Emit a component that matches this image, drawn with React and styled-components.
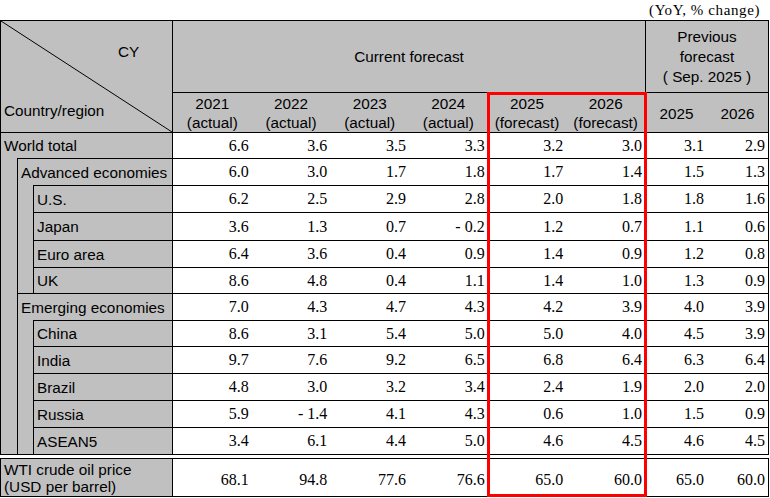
import React from 'react';
import styled, { createGlobalStyle } from 'styled-components';

const GRAY = '#c0c0c0';
const LINE = '1px solid #000';

const GlobalStyle = createGlobalStyle`
  html, body {
    margin: 0;
    padding: 0;
    background: #fff;
  }
  body {
    font-family: "Liberation Sans", Arial, sans-serif;
    color: #000;
  }
`;

const rows = [
  { label: 'World total', level: 0, h: 26, cur: ['6.6', '3.6', '3.5', '3.3', '3.2', '3.0'], prev: ['3.1', '2.9'] },
  { label: 'Advanced economies', level: 1, h: 27, cur: ['6.0', '3.0', '1.7', '1.8', '1.7', '1.4'], prev: ['1.5', '1.3'] },
  { label: 'U.S.', level: 2, h: 27, cur: ['6.2', '2.5', '2.9', '2.8', '2.0', '1.8'], prev: ['1.8', '1.6'] },
  { label: 'Japan', level: 2, h: 28, cur: ['3.6', '1.3', '0.7', '- 0.2', '1.2', '0.7'], prev: ['1.1', '0.6'] },
  { label: 'Euro area', level: 2, h: 27, cur: ['6.4', '3.6', '0.4', '0.9', '1.4', '0.9'], prev: ['1.2', '0.8'] },
  { label: 'UK', level: 2, h: 26, cur: ['8.6', '4.8', '0.4', '1.1', '1.4', '1.0'], prev: ['1.3', '0.9'] },
  { label: 'Emerging economies', level: 1, h: 27, cur: ['7.0', '4.3', '4.7', '4.3', '4.2', '3.9'], prev: ['4.0', '3.9'] },
  { label: 'China', level: 2, h: 26, cur: ['8.6', '3.1', '5.4', '5.0', '5.0', '4.0'], prev: ['4.5', '3.9'] },
  { label: 'India', level: 2, h: 27, cur: ['9.7', '7.6', '9.2', '6.5', '6.8', '6.4'], prev: ['6.3', '6.4'] },
  { label: 'Brazil', level: 2, h: 27, cur: ['4.8', '3.0', '3.2', '3.4', '2.4', '1.9'], prev: ['2.0', '2.0'] },
  { label: 'Russia', level: 2, h: 27, cur: ['5.9', '- 1.4', '4.1', '4.3', '0.6', '1.0'], prev: ['1.5', '0.9'] },
  { label: 'ASEAN5', level: 2, h: 27, cur: ['3.4', '6.1', '4.4', '5.0', '4.6', '4.5'], prev: ['4.6', '4.5'] },
];

const years = [
  ['2021', '(actual)'],
  ['2022', '(actual)'],
  ['2023', '(actual)'],
  ['2024', '(actual)'],
  ['2025', '(forecast)'],
  ['2026', '(forecast)'],
];

const Sheet = styled.div`
  position: relative;
  width: 769px;
`;

const Caption = styled.div`
  height: 20px;
  line-height: 20px;
  padding-right: 9px;
  text-align: right;
  font-family: "Liberation Serif", "Times New Roman", serif;
  font-size: 15px;
  letter-spacing: 0.6px;
`;

const Block = styled.div`
  box-sizing: border-box;
  width: 769px;
  border: ${LINE};
  margin-top: ${(p) => p.$gap || 0}px;
`;

const Header = styled.div`
  display: grid;
  grid-template-columns: 172px 473px 1fr;
  grid-template-rows: 71px 40px;
  background: ${GRAY};
  font-size: 15.3px;
`;

const CornerCell = styled.div`
  position: relative;
  grid-row: 1 / span 2;
  box-sizing: border-box;
  border-right: ${LINE};
  display: flex;
  flex-direction: column;
  justify-content: space-between;
`;

const Diagonal = styled.svg`
  position: absolute;
  left: 0;
  top: 0;
  width: 100%;
  height: 100%;
`;

const CornerTop = styled.span`
  padding: 22px 0 0 117px;
  line-height: 18px;
`;

const CornerBottom = styled.span`
  padding: 0 0 12px 3px;
  line-height: 18px;
`;

const GroupTitle = styled.div`
  box-sizing: border-box;
  display: flex;
  align-items: center;
  justify-content: center;
  text-align: center;
  line-height: 20px;
  border-right: ${(p) => (p.$divider ? LINE : 'none')};
`;

const SubHeads = styled.div`
  box-sizing: border-box;
  display: grid;
  grid-template-columns: repeat(${(p) => p.$cols}, 1fr);
  border-top: ${LINE};
  border-right: ${(p) => (p.$divider ? LINE : 'none')};
`;

const SubHead = styled.div`
  display: flex;
  flex-direction: column;
  align-items: center;
  justify-content: center;
  line-height: 19px;
  padding-top: ${(p) => (p.$single ? 1 : 0)}px;
`;

const Row = styled.div`
  display: grid;
  grid-template-columns: 172px 473px 1fr;
  height: ${(p) => p.$h}px;
`;

const LabelCell = styled.div`
  box-sizing: border-box;
  display: flex;
  background: ${GRAY};
  border-right: ${LINE};
  font-size: 15.3px;
`;

const Gutter = styled.span`
  box-sizing: border-box;
  flex: 0 0 ${(p) => p.$w}px;
  border-right: ${LINE};
`;

const LabelText = styled.div`
  flex: 1;
  display: flex;
  flex-direction: column;
  justify-content: center;
  padding-left: 3px;
  border-top: ${(p) => (p.$noTop ? 'none' : LINE)};
  line-height: 17px;
  white-space: nowrap;
`;

const Numbers = styled.div`
  box-sizing: border-box;
  display: grid;
  grid-template-columns: repeat(${(p) => p.$cols}, 1fr);
  border-top: ${(p) => (p.$noTop ? 'none' : LINE)};
  border-right: ${(p) => (p.$divider ? LINE : 'none')};
`;

const Num = styled.div`
  display: flex;
  align-items: center;
  justify-content: flex-end;
  padding-right: 3px;
  padding-top: ${(p) => p.$shift || 0}px;
  font-family: "Liberation Serif", "Times New Roman", serif;
  font-size: 16px;
  white-space: pre;
`;

const Highlight = styled.div`
  position: absolute;
  left: 487px;
  top: 92px;
  width: 160px;
  height: 405px;
  box-sizing: border-box;
  border: 3px solid #ff0000;
  pointer-events: none;
`;

function DataRow({ row }) {
  const gutters = row.level === 2 ? [17, 16] : row.level === 1 ? [17] : [];
  return (
    <Row $h={row.h}>
      <LabelCell>
        {gutters.map((w, i) => (
          <Gutter key={i} $w={w} />
        ))}
        <LabelText>{row.label}</LabelText>
      </LabelCell>
      <Numbers $cols={6} $divider>
        {row.cur.map((v, i) => (
          <Num key={i}>{v}</Num>
        ))}
      </Numbers>
      <Numbers $cols={2}>
        {row.prev.map((v, i) => (
          <Num key={i}>{v}</Num>
        ))}
      </Numbers>
    </Row>
  );
}

export default function App() {
  return (
    <Sheet>
      <GlobalStyle />
      <Caption>(YoY, % change)</Caption>
      <Block>
        <Header>
          <CornerCell>
            <Diagonal viewBox="0 0 100 100" preserveAspectRatio="none">
              <line x1="0" y1="0" x2="100" y2="100" stroke="#000" strokeWidth="1" vectorEffect="non-scaling-stroke" />
            </Diagonal>
            <CornerTop>CY</CornerTop>
            <CornerBottom>Country/region</CornerBottom>
          </CornerCell>
          <GroupTitle $divider>Current forecast</GroupTitle>
          <GroupTitle>
            Previous
            <br />
            forecast
            <br />( Sep. 2025 )
          </GroupTitle>
          <SubHeads $cols={6} $divider>
            {years.map(([y, k]) => (
              <SubHead key={y}>
                <span>{y}</span>
                <span>{k}</span>
              </SubHead>
            ))}
          </SubHeads>
          <SubHeads $cols={2}>
            <SubHead $single>2025</SubHead>
            <SubHead $single>2026</SubHead>
          </SubHeads>
        </Header>
        {rows.map((r) => (
          <DataRow key={r.label} row={r} />
        ))}
      </Block>
      <Block $gap={3}>
        <Row $h={37}>
          <LabelCell>
            <LabelText $noTop>
              <span>WTI crude oil price</span>
              <span>(USD per barrel)</span>
            </LabelText>
          </LabelCell>
          <Numbers $cols={6} $divider $noTop>
            {['68.1', '94.8', '77.6', '76.6', '65.0', '60.0'].map((v, i) => (
              <Num key={i} $shift={5}>{v}</Num>
            ))}
          </Numbers>
          <Numbers $cols={2} $noTop>
            {['65.0', '60.0'].map((v, i) => (
              <Num key={i} $shift={5}>{v}</Num>
            ))}
          </Numbers>
        </Row>
      </Block>
      <Highlight />
    </Sheet>
  );
}
